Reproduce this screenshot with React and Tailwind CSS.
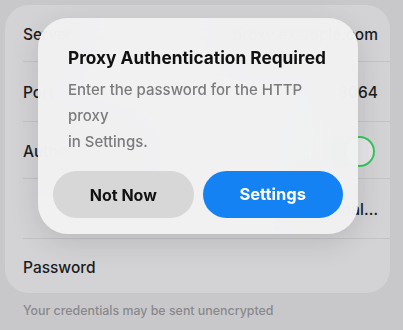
const font = { fontFamily: "Inter, 'Noto Sans', sans-serif" };

function Row({ label, value, height, last, children }) {
  return (
    <div className={`flex items-center pl-[18px] ${height}`}>
      <div
        className={`flex h-full flex-1 items-center justify-between pr-[12px] pt-[3px] ${
          last ? "" : "border-b border-[#c3c3c6]"
        }`}
      >
        <span className="text-[15.5px] font-medium text-[#1c1c1e]">{label}</span>
        {children || (
          <span className="text-[15.5px] font-medium text-[#1c1c1e]">{value}</span>
        )}
      </div>
    </div>
  );
}

export default function App() {
  return (
    <div
      className="relative h-[330px] w-[403px] overflow-hidden bg-[#c8c8cb] pl-[5px] pt-[5px]"
      style={font}
    >
      <div className="w-[385px] overflow-hidden rounded-[24px] bg-[#d3d3d5]">
        <Row label="Server" value="proxy.example.com" height="h-[57px]" />
        <Row label="Port" value="8064" height="h-[60px]" />
        <Row label="Authentication" height="h-[57px]">
          <div className="mr-[3px] flex h-[31px] w-[51px] items-center justify-end rounded-full bg-[#34c759] px-[2px]">
            <div className="h-[27px] w-[27px] rounded-full bg-[#e6e6e8]" />
          </div>
        </Row>
        <Row label="" value="Optional…" height="h-[60px]" />
        <Row label="Password" height="h-[54px]" last />
      </div>
      <p className="mt-[9px] pl-[18px] text-[12.4px] font-medium text-[#88888c]">
        Your credentials may be sent unencrypted
      </p>

      <div className="absolute left-[38px] top-[18px] w-[320px] rounded-[30px] bg-[#f1f1f2]/[0.96] px-[15px] pb-[16px] pt-[28px] shadow-[0_8px_30px_rgba(0,0,0,0.12)] backdrop-blur-xl">
        <div className="px-[15px]">
          <h2 className="text-[17.3px] font-bold leading-[24px] text-[#111]">
            Proxy Authentication Required
          </h2>
          <p className="mt-[7px] text-[15px] font-medium leading-[26px] text-[#7b7b7e]">
            Enter the password for the HTTP
            <br />
            proxy
            <br />
            in Settings.
          </p>
        </div>
        <div className="mt-[16px] flex gap-[9px]">
          <button className="h-[47px] flex-1 rounded-full bg-[#d7d7d8] text-[16px] font-bold text-[#111]">
            Not Now
          </button>
          <button className="h-[47px] flex-1 rounded-full bg-[#1582f4] text-[16.5px] font-bold text-white">
            Settings
          </button>
        </div>
      </div>
    </div>
  );
}
